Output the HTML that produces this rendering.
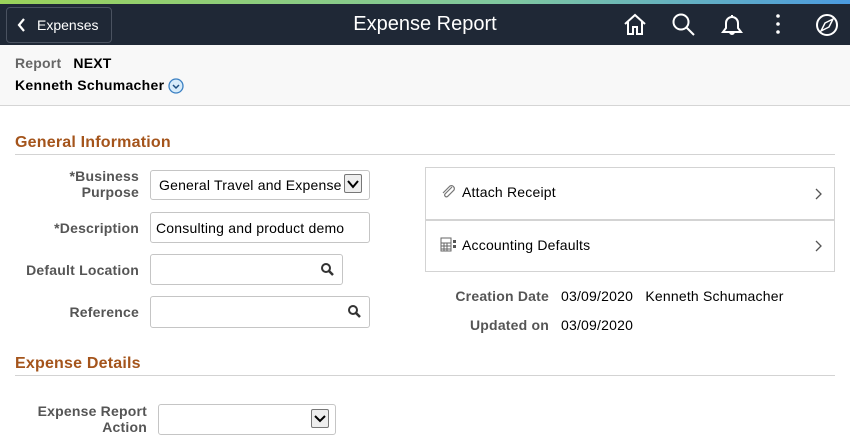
<!DOCTYPE html>
<html><head><meta charset="utf-8"><style>
*{margin:0;padding:0;box-sizing:border-box}
body{width:850px;height:441px;overflow:hidden;background:#fff;font-family:"Liberation Sans",Arial,sans-serif;position:relative}
.a{position:absolute}
.lbl{position:absolute;font-size:14px;font-weight:bold;color:#555;text-align:right;line-height:16px;letter-spacing:0.2px}
.inp{position:absolute;border:1px solid #c5c5c5;border-radius:3px;background:#fff;font-size:14px;color:#000;letter-spacing:0.2px}
.hd{position:absolute;left:15px;width:820px;color:#a4541b;font-size:16px;font-weight:bold;border-bottom:1px solid #d3d3d3;letter-spacing:0.2px}
.dd{position:absolute;width:18px;height:19px;border:1px solid #777;background:#eee;border-radius:2px}
</style></head><body>
<div class="a" style="left:0;top:0;width:850px;height:4px;background:linear-gradient(90deg,#9bd35a,#7fc7a0 60%,#4b9be0)"></div>
<div class="a" style="left:0;top:4px;width:850px;height:41px;background:#1f2836"></div>
<div class="a" style="left:6px;top:7px;width:106px;height:36px;border:1px solid #4a5260;border-radius:4px;color:#fff;font-size:14px;line-height:34px;padding-left:30px">Expenses</div>
<svg class="a" style="left:16px;top:17px" width="12" height="16" viewBox="0 0 12 16"><path d="M8 2 L3 8 L8 14" stroke="#fff" stroke-width="2.2" fill="none"/></svg>
<div class="a" style="left:0;width:850px;top:13px;text-align:center;color:#fff;font-size:20px">Expense Report</div>
<svg class="a" style="left:622px;top:12px" width="220" height="26" viewBox="0 0 220 26" fill="none" stroke="#fff" stroke-width="2">
<path d="M3 12 L13 3 L23 12 M6 10 V22 H11 V15 H15 V22 H20 V10"/>
<circle cx="59" cy="10" r="7.5"/><path d="M64.5 15.5 L72 23"/>
<path d="M101 20 H119 L116 16 V11 A6 6 0 0 0 104 11 V16 Z M108 20 a2 2 0 0 0 4 0 M110 3 V5"/>
<circle cx="156" cy="4" r="1.8" fill="#fff" stroke="none"/><circle cx="156" cy="12" r="1.8" fill="#fff" stroke="none"/><circle cx="156" cy="20" r="1.8" fill="#fff" stroke="none"/>
<circle cx="205" cy="13" r="10"/><path d="M211 7 L207 15 L199 19 L203 11 Z" stroke-width="1.5"/>
</svg>
<div class="a" style="left:0;top:45px;width:850px;height:61px;background:#f8f8f8;border-bottom:1px solid #d5d5d5"></div>
<div class="a" style="left:15px;top:55px;font-size:14px;color:#666;font-weight:bold;letter-spacing:0.2px">Report <span style="color:#000;margin-left:8px">NEXT</span></div>
<div class="a" style="left:15px;top:77px;font-size:14px;color:#000;font-weight:bold;letter-spacing:0.3px">Kenneth Schumacher</div>
<svg class="a" style="left:168px;top:78px" width="16" height="16" viewBox="0 0 16 16"><circle cx="8" cy="8" r="7" fill="#d8ecfa" stroke="#3b80c3" stroke-width="1.3"/><path d="M5 7 L8 10 L11 7" stroke="#1d4e80" stroke-width="1.5" fill="none"/></svg>

<div class="hd" style="top:134px;height:21px">General Information</div>
<div class="lbl" style="left:20px;width:119px;top:168px">*Business<br>Purpose</div>
<div class="inp" style="left:150px;top:170px;width:220px;height:30px;padding:6px 0 0 8px;overflow:hidden;white-space:nowrap">General Travel and Expense</div>
<div class="dd" style="left:344px;top:174px"></div>
<svg class="a" style="left:346px;top:178px" width="14" height="12"><path d="M2 3 L7 9 L12 3" stroke="#000" stroke-width="2" fill="none"/></svg>
<div class="lbl" style="left:20px;width:119px;top:220px">*Description</div>
<div class="inp" style="left:150px;top:212px;width:220px;height:31px;padding:7px 0 0 5px">Consulting and product demo</div>
<div class="lbl" style="left:0;width:139px;top:262px">Default Location</div>
<div class="inp" style="left:150px;top:254px;width:193px;height:31px"></div>
<div class="lbl" style="left:0;width:139px;top:304px">Reference</div>
<div class="inp" style="left:150px;top:296px;width:220px;height:32px"></div>
<svg class="a" style="left:320px;top:262px" width="16" height="16"><circle cx="6" cy="6" r="4" stroke="#333" stroke-width="2" fill="none"/><path d="M9 9 L13 13" stroke="#333" stroke-width="2.5"/></svg>
<svg class="a" style="left:347px;top:304px" width="16" height="16"><circle cx="6" cy="6" r="4" stroke="#333" stroke-width="2" fill="none"/><path d="M9 9 L13 13" stroke="#333" stroke-width="2.5"/></svg>

<div class="a" style="left:425px;top:167px;width:410px;height:105px;border:1px solid #d3d3d3"></div>
<div class="a" style="left:426px;top:219px;width:408px;height:2px;background:#d3d3d3"></div>
<svg class="a" style="left:441px;top:184px" width="16" height="14" viewBox="0 0 16 14"><path d="M11 3 L4 10 a1.8 1.8 0 0 0 2.5 2.5 L13 6 a3 3 0 0 0 -4 -4 L2 9" stroke="#777" stroke-width="1.2" fill="none"/></svg>
<div class="a" style="left:462px;top:184px;font-size:14px;letter-spacing:0.2px">Attach Receipt</div>
<svg class="a" style="left:440px;top:237px" width="20" height="16"><rect x="1" y="1" width="10" height="13" fill="none" stroke="#666"/><path d="M1 6 H11 M1 9 H11 M1 12 H11 M4 6 V14 M7 6 V14" stroke="#666"/><rect x="13" y="3" width="3" height="3" fill="#555"/><rect x="13" y="8" width="3" height="3" fill="#555"/></svg>
<div class="a" style="left:462px;top:237px;font-size:14px;letter-spacing:0.2px">Accounting Defaults</div>
<svg class="a" style="left:814px;top:188px" width="10" height="12"><path d="M2 1 L7 6 L2 11" stroke="#555" stroke-width="1.3" fill="none"/></svg>
<svg class="a" style="left:814px;top:240px" width="10" height="12"><path d="M2 1 L7 6 L2 11" stroke="#555" stroke-width="1.3" fill="none"/></svg>
<div class="lbl" style="left:400px;width:149px;top:288px">Creation Date</div>
<div class="a" style="left:561px;top:288px;font-size:14px;letter-spacing:0.2px">03/09/2020&nbsp;&nbsp;&nbsp;Kenneth Schumacher</div>
<div class="lbl" style="left:400px;width:149px;top:317px">Updated on</div>
<div class="a" style="left:561px;top:317px;font-size:14px;letter-spacing:0.2px">03/09/2020</div>

<div class="hd" style="top:355px;height:21px">Expense Details</div>
<div class="lbl" style="left:0;width:147px;top:403px">Expense Report<br>Action</div>
<div class="inp" style="left:158px;top:404px;width:178px;height:31px"></div>
<div class="dd" style="left:311px;top:409px"></div>
<svg class="a" style="left:313px;top:413px" width="14" height="12"><path d="M2 3 L7 8 L12 3" stroke="#000" stroke-width="2" fill="none"/></svg>
</body></html>
